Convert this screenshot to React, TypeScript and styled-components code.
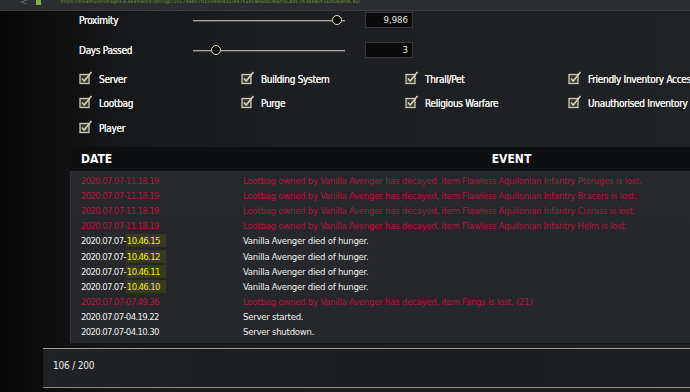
import styled, { createGlobalStyle } from 'styled-components';

const GlobalStyle = createGlobalStyle`
  html, body {
    margin: 0;
    padding: 0;
    background: #0c0c0c;
    overflow: hidden;
  }
  body {
    width: 690px;
    height: 392px;
  }
`;

const FONT = `"DejaVu Sans Condensed", "Liberation Sans", sans-serif`;

interface LogRow {
  date: string;
  time: string;
  event: string;
  kind: 'loot' | 'hunger' | 'server';
}

const loot = (item: string) =>
  `Lootbag owned by Vanilla Avenger has decayed, item ${item} is lost.`;

const rows: LogRow[] = [
  { date: '2020.07.07-', time: '11.18.19', event: loot('Flawless Aquilonian Infantry Pteruges'), kind: 'loot' },
  { date: '2020.07.07-', time: '11.18.19', event: loot('Flawless Aquilonian Infantry Bracers'), kind: 'loot' },
  { date: '2020.07.07-', time: '11.18.19', event: loot('Flawless Aquilonian Infantry Cuirass'), kind: 'loot' },
  { date: '2020.07.07-', time: '11.18.19', event: loot('Flawless Aquilonian Infantry Helm'), kind: 'loot' },
  { date: '2020.07.07-', time: '10.46.15', event: 'Vanilla Avenger died of hunger.', kind: 'hunger' },
  { date: '2020.07.07-', time: '10.46.12', event: 'Vanilla Avenger died of hunger.', kind: 'hunger' },
  { date: '2020.07.07-', time: '10.46.11', event: 'Vanilla Avenger died of hunger.', kind: 'hunger' },
  { date: '2020.07.07-', time: '10.46.10', event: 'Vanilla Avenger died of hunger.', kind: 'hunger' },
  { date: '2020.07.07-', time: '07.49.36', event: loot('Fangs') + ' (21)', kind: 'loot' },
  { date: '2020.07.07-', time: '04.19.22', event: 'Server started.', kind: 'server' },
  { date: '2020.07.07-', time: '04.10.30', event: 'Server shutdown.', kind: 'server' },
];

const filters = [
  'Server',
  'Building System',
  'Thrall/Pet',
  'Friendly Inventory Access',
  'Lootbag',
  'Purge',
  'Religious Warfare',
  'Unauthorised Inventory Access',
  'Player',
];

const CheckIcon = () => (
  <svg width='14' height='14' viewBox='0 0 14 14'>
    <rect x='1' y='3.5' width='9' height='9' fill='#3a3934' stroke='#cfcbb8' strokeWidth='1.3' />
    <path d='M3 7.5 L5.2 10 L12.5 1' fill='none' stroke='#d8d4c0' strokeWidth='1.5' />
  </svg>
);

export default () => {
  return (
    <>
      <GlobalStyle />
      <Screen>
        <BrowserBar>
          <Back>&lt;</Back>
          <Lock />
          <Url>https://steamuserimages-a.akamaihd.net/ugc/1017446570150490431/A47F2A5B6E0D36EF5CB8C7A3E6B0F1D0DE4F8C91/</Url>
        </BrowserBar>
        <Page>
          <Filters>
            <SliderRow>
              <Label>Proximity</Label>
              <Slider>
                <Thumb $pos={94.7} />
              </Slider>
              <ValueBox>9,986</ValueBox>
            </SliderRow>
            <SliderRow>
              <Label>Days Passed</Label>
              <Slider>
                <Thumb $pos={15} />
              </Slider>
              <ValueBox>3</ValueBox>
            </SliderRow>
            <CheckGrid>
              {filters.map((f) => (
                <CheckItem key={f}>
                  <CheckIcon />
                  <span>{f}</span>
                </CheckItem>
              ))}
            </CheckGrid>
          </Filters>
          <Table>
            <HeadRow>
              <HeadDate>DATE</HeadDate>
              <HeadEvent>EVENT</HeadEvent>
            </HeadRow>
            <Body>
              {rows.map((r, i) => (
                <Row key={i} $kind={r.kind}>
                  <DateCell>
                    {r.date}
                    {r.kind === 'hunger' ? <Marked>{r.time}</Marked> : r.time}
                  </DateCell>
                  <EventCell>{r.event}</EventCell>
                </Row>
              ))}
            </Body>
          </Table>
          <Footer>
            <span>106 / 200</span>
          </Footer>
        </Page>
      </Screen>
    </>
  );
};

const Screen = styled.div`
  width: 690px;
  height: 392px;
  overflow: hidden;
  font-family: ${FONT};
  background: linear-gradient(
    90deg,
    #070707 0%,
    #0d0d0d 6%,
    #17181a 18%,
    #1d1e21 40%,
    #202124 100%
  );
  display: flex;
  flex-direction: column;
`;

const BrowserBar = styled.div`
  height: 10px;
  flex: none;
  background: #2b2d30;
  border-bottom: 1px solid #3b3d40;
  display: flex;
  align-items: flex-start;
  gap: 8px;
  padding-left: 20px;
  overflow: hidden;
`;

const Back = styled.span`
  color: #6e7073;
  font-size: 9px;
  line-height: 5px;
  font-family: 'DejaVu Sans', sans-serif;
`;

const Lock = styled.span`
  width: 5px;
  height: 5px;
  background: #7fae3a;
`;

const Url = styled.span`
  color: #6f9a38;
  font-size: 5px;
  line-height: 2px;
  letter-spacing: 0.2px;
  white-space: nowrap;
  margin-left: 12px;
`;

const Page = styled.div`
  flex: 1;
  display: flex;
  flex-direction: column;
`;

const Filters = styled.div`
  padding: 1px 0 0 79px;
  display: flex;
  flex-direction: column;
  gap: 14px;
`;

const SliderRow = styled.div`
  display: grid;
  grid-template-columns: 114px 152px 68px;
  align-items: center;
  height: 16px;
`;

const Label = styled.div`
  color: #e6e6e2;
  font-size: 10px;
  letter-spacing: -0.3px;
  text-shadow: 0 0 0.6px #e6e6e2, 0 0 0.3px #e6e6e2;
`;

const Slider = styled.div`
  position: relative;
  height: 1px;
  background: #a9a8a0;
  box-shadow: 0 1px 0 #4a4a46;
`;

const Thumb = styled.div<{ $pos: number }>`
  position: absolute;
  top: -5px;
  left: calc(${(p) => p.$pos}% - 5px);
  width: 8px;
  height: 8px;
  border-radius: 50%;
  border: 1.5px solid #e9e1b4;
  background: #0c0c0c;
`;

const ValueBox = styled.div`
  margin-left: 20px;
  height: 16px;
  box-sizing: border-box;
  background: #0a0a0a;
  border: 1px solid #38393b;
  color: #e6e6e2;
  font-size: 9.5px;
  line-height: 14px;
  text-align: right;
  padding-right: 4px;
`;

const CheckGrid = styled.div`
  display: grid;
  grid-template-columns: 162px 164px 163px 200px;
  grid-auto-rows: 24.5px;
  margin-top: -5px;
`;

const CheckItem = styled.div`
  display: flex;
  align-items: center;
  gap: 6px;
  color: #e6e6e2;
  font-size: 10px;
  letter-spacing: -0.3px;
  text-shadow: 0 0 0.6px #e6e6e2, 0 0 0.3px #e6e6e2;
  white-space: nowrap;
  svg {
    flex: none;
    margin-top: -3px;
  }
`;

const Table = styled.div`
  margin: 6px 0 0 70px;
  width: 710px;
`;

const HeadRow = styled.div`
  display: grid;
  grid-template-columns: 173px 1fr;
  height: 24px;
  align-items: center;
  background: #0e0f11;
  border-bottom: 1px solid #2d2f32;
`;

const HeadDate = styled.div`
  color: #ffffff;
  font-size: 12px;
  font-weight: 700;
  padding-left: 11px;
`;

const HeadEvent = styled(HeadDate)`
  padding-left: 0;
  text-align: center;
`;

const Body = styled.div`
  background: linear-gradient(180deg, #26282b 0%, #25272a 100%);
  border-left: 1px solid #303235;
  padding: 1px 0 3px;
  border-bottom: 1px solid #141517;
`;

const rowColor = {
  loot: '#b3163b',
  hunger: '#f0f0ec',
  server: '#f0f0ec',
};

const Row = styled.div<{ $kind: 'loot' | 'hunger' | 'server' }>`
  display: grid;
  grid-template-columns: 172px 1fr;
  height: 15.2px;
  align-items: center;
  font-size: 9.5px;
  letter-spacing: -0.25px;
  color: ${(p) => rowColor[p.$kind]};
  white-space: nowrap;
`;

const DateCell = styled.div`
  padding-left: 10px;
  letter-spacing: -0.65px;
`;

const EventCell = styled.div``;

const Marked = styled.span`
  color: #f2f000;
  background: rgba(100, 100, 20, 0.3);
  padding: 1px 6px 1px 1px;
`;

const Footer = styled.div`
  margin: 4px 0 0 43px;
  height: 40px;
  box-sizing: border-box;
  border-top: 1px solid #a19d86;
  border-bottom: 1px solid #8e8a74;
  background: linear-gradient(90deg, #202124 0%, #1b1c1f 60%, #1e1f22 100%);
  display: flex;
  align-items: center;
  padding: 0 0 4px 10px;
  color: #eeeeea;
  font-size: 10px;
  letter-spacing: -0.2px;
`;
